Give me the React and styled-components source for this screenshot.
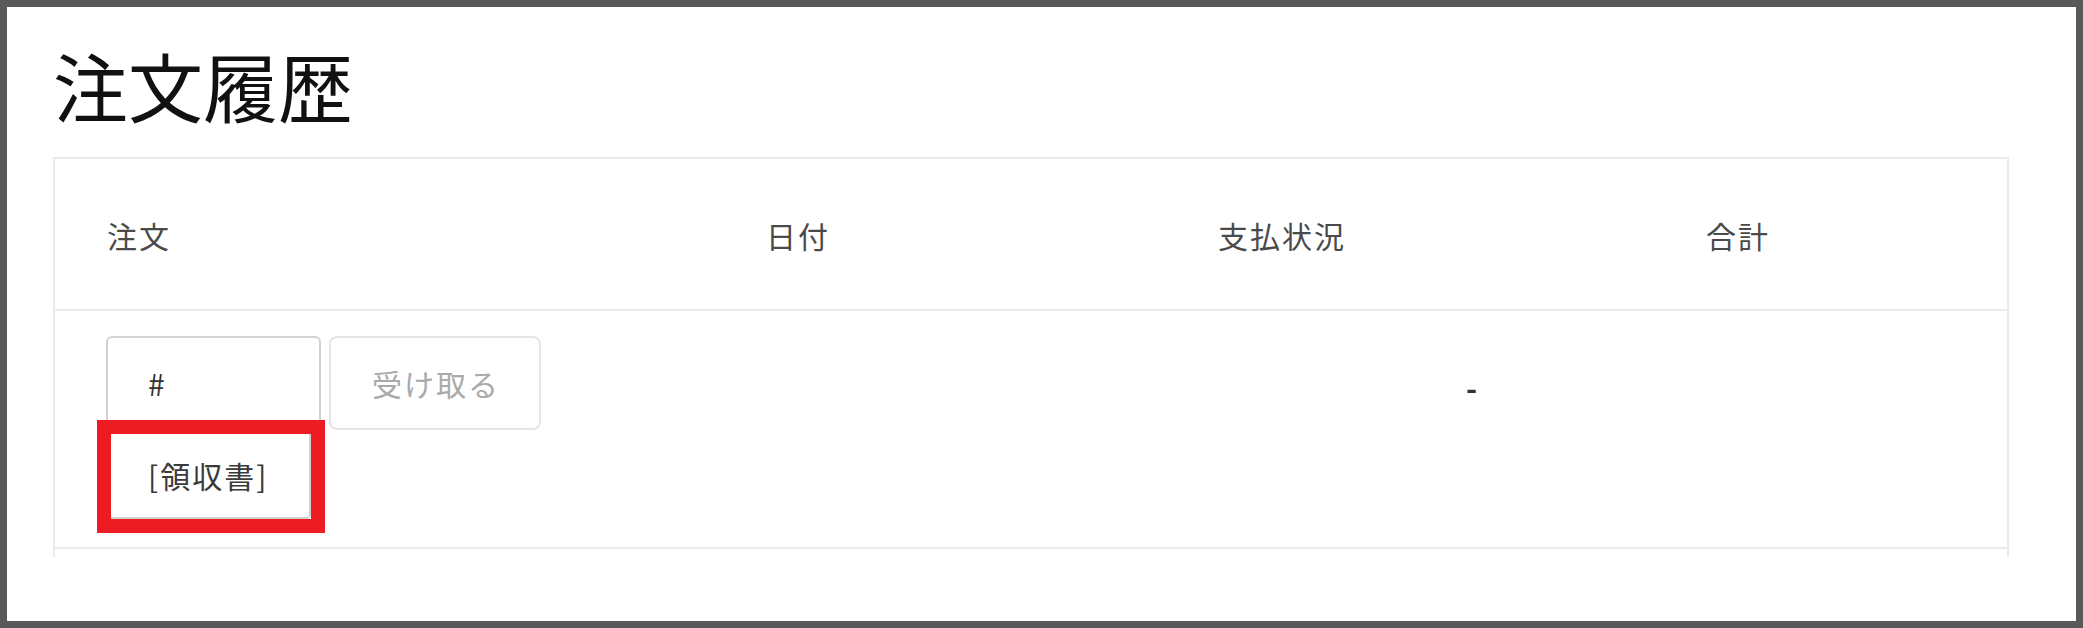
import React from 'react'
import styled, { createGlobalStyle } from 'styled-components'

const GlobalStyle = createGlobalStyle`
  html, body {
    margin: 0;
    padding: 0;
    background: #fff;
  }
  body {
    font-family: "Noto Sans CJK JP", "Noto Sans", sans-serif;
  }
`;

// column widths of the order table (inner width 1952)
const columns = ['659px', '452px', '488px', '353px'];

const headers = ['注文', '日付', '支払状況', '合計'];

function App() {
  return (
    <>
      <GlobalStyle />
      <Frame>
        <Title>注文履歴</Title>
        <Table>
          {headers.map((h) => (
            <HeadCell key={h}>{h}</HeadCell>
          ))}

          <BodyCell>
            <ButtonStack>
              <ButtonRow>
                <OrderButton>#</OrderButton>
                <ReceiveButton disabled>受け取る</ReceiveButton>
              </ButtonRow>
              <Highlight>
                <ReceiptButton>[領収書]</ReceiptButton>
              </Highlight>
            </ButtonStack>
          </BodyCell>
          <BodyCell />
          <BodyCell>
            <Dash>-</Dash>
          </BodyCell>
          <BodyCell />
        </Table>
      </Frame>
    </>
  )
}

const Frame = styled.div`
  box-sizing: border-box;
  height: 628px;
  border: 7px solid #595959;
  background: #fff;
  padding: 40px 0 0 46px;
  overflow: hidden;
`;

const Title = styled.h1`
  margin: 0;
  font-size: 75px;
  line-height: 75px;
  font-weight: 400;
  color: #111;
`;

const Table = styled.div`
  display: grid;
  grid-template-columns: ${columns.join(' ')};
  width: 1956px;
  box-sizing: border-box;
  margin-top: 35px;
  padding-bottom: 8px;
  border: 2px solid #ebebeb;
  border-bottom: none;
`;

const HeadCell = styled.div`
  box-sizing: border-box;
  height: 152px;
  padding: 61px 0 0 52px;
  border-bottom: 2px solid #ebebeb;
  font-size: 30px;
  line-height: 30px;
  letter-spacing: 2px;
  color: #4a4a4a;
`;

const BodyCell = styled.div`
  box-sizing: border-box;
  height: 238px;
  padding: 25px 0 0 51px;
  border-bottom: 2px solid #ebebeb;
`;

const ButtonStack = styled.div`
  display: flex;
  flex-direction: column;
  align-items: flex-start;
`;

const ButtonRow = styled.div`
  display: flex;
  gap: 8px;
`;

const BaseButton = styled.button`
  display: flex;
  align-items: center;
  box-sizing: border-box;
  height: 94px;
  padding: 0 40px;
  background: #fff;
  border: 2px solid #d2d2d2;
  border-radius: 6px;
  font-family: "Noto Sans CJK JP", "Noto Sans", sans-serif;
  font-size: 30px;
  line-height: 30px;
  letter-spacing: 2px;
  white-space: nowrap;
  color: #333;
`;

const OrderButton = styled(BaseButton)`
  width: 215px;
`;

const ReceiveButton = styled(BaseButton)`
  width: 212px;
  padding: 0 0 0 41px;
  border-color: #e6e6e6;
  border-radius: 8px;
  color: #aaa;
`;

const ReceiptButton = styled(BaseButton)`
  width: 205px;
  height: 89px;
  border-radius: 4px;
  color: #3a3a3a;
`;

// red annotation frame drawn over the receipt link
const Highlight = styled.div`
  position: relative;

  &::after {
    content: '';
    position: absolute;
    left: -9px;
    top: -10px;
    width: 228px;
    height: 113px;
    box-sizing: border-box;
    border: 14px solid #ed1c24;
    pointer-events: none;
  }
`;

const Dash = styled.div`
  padding: 36px 0 0 249px;
  font-size: 30px;
  line-height: 30px;
  font-weight: 700;
  color: #333;
`;

export default App
